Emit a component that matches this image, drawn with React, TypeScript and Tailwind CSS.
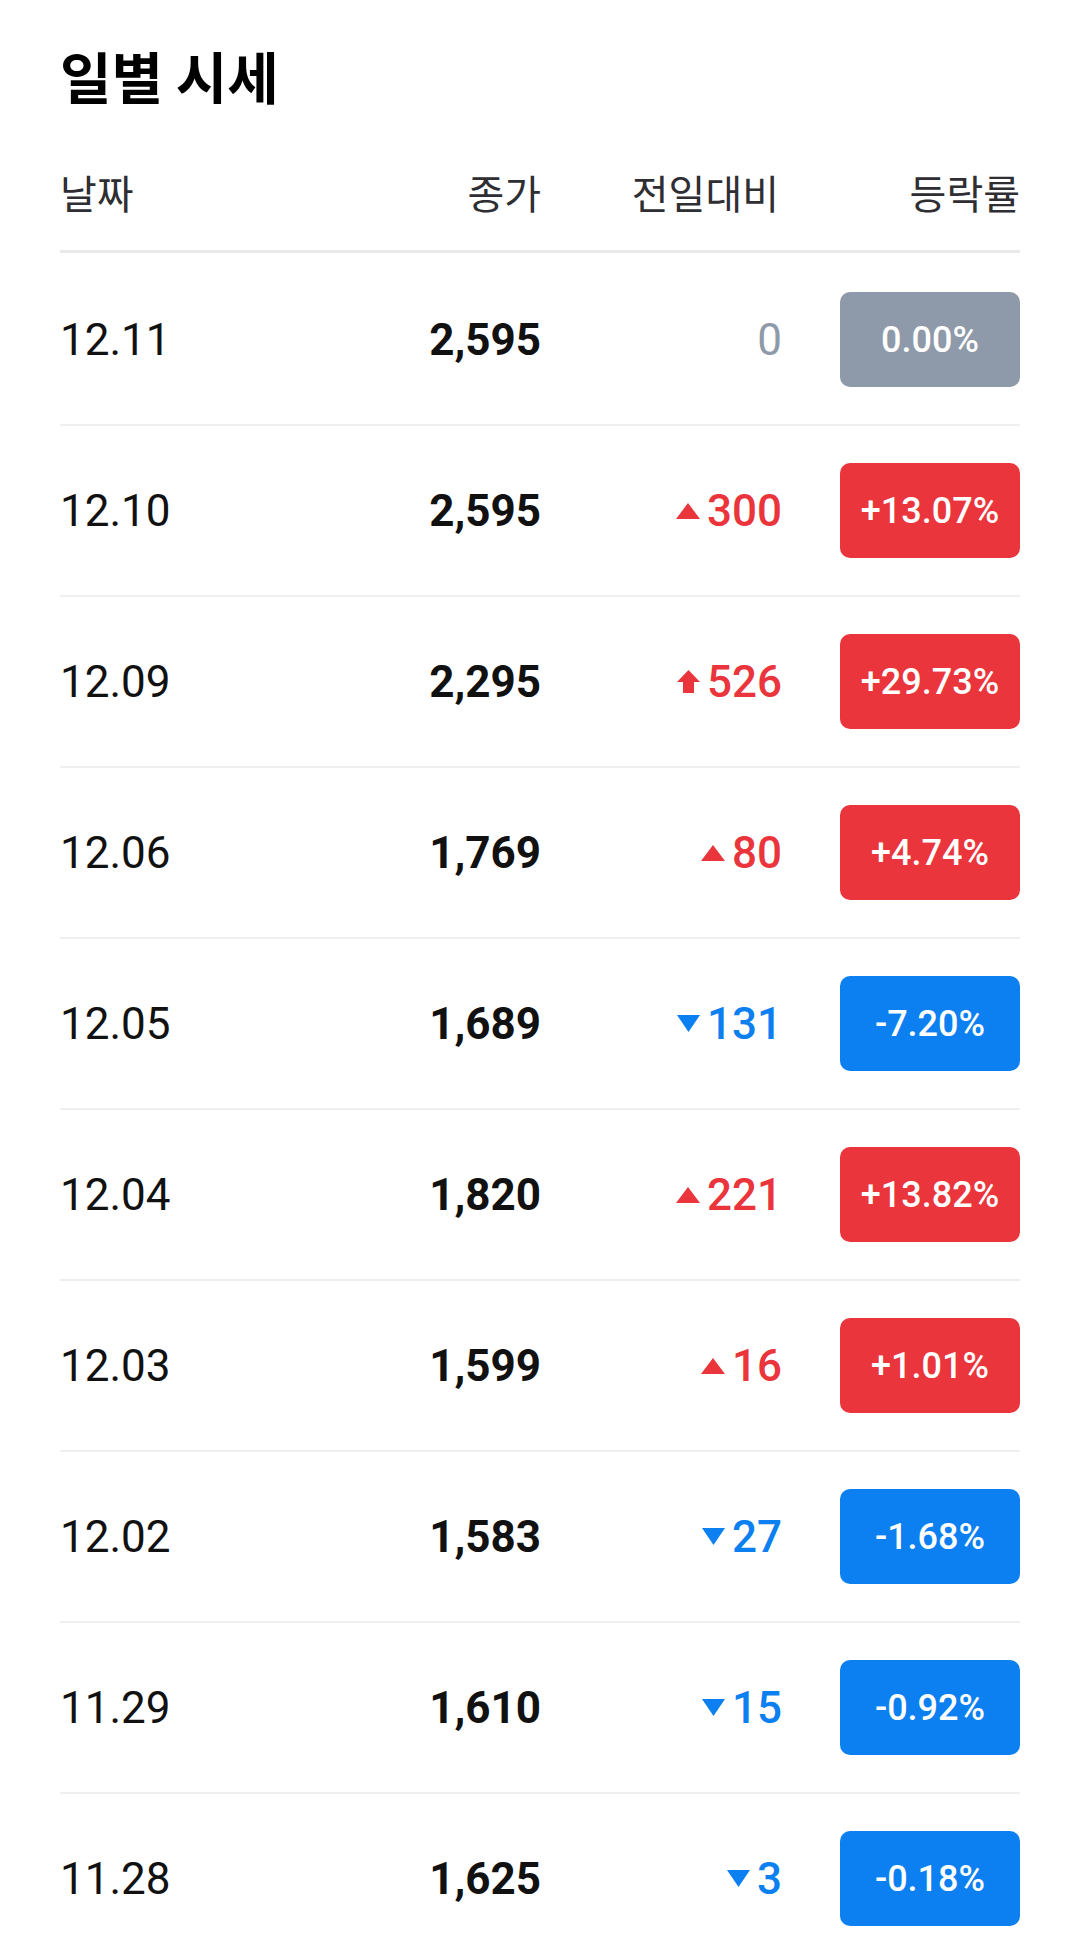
import React from "react";

type Dir = "flat" | "up" | "limit" | "down";
const rows: { d: string; p: string; c: string; r: string; dir: Dir }[] = [
  { d: "12.11", p: "2,595", c: "0", r: "0.00%", dir: "flat" },
  { d: "12.10", p: "2,595", c: "300", r: "+13.07%", dir: "up" },
  { d: "12.09", p: "2,295", c: "526", r: "+29.73%", dir: "limit" },
  { d: "12.06", p: "1,769", c: "80", r: "+4.74%", dir: "up" },
  { d: "12.05", p: "1,689", c: "131", r: "-7.20%", dir: "down" },
  { d: "12.04", p: "1,820", c: "221", r: "+13.82%", dir: "up" },
  { d: "12.03", p: "1,599", c: "16", r: "+1.01%", dir: "up" },
  { d: "12.02", p: "1,583", c: "27", r: "-1.68%", dir: "down" },
  { d: "11.29", p: "1,610", c: "15", r: "-0.92%", dir: "down" },
  { d: "11.28", p: "1,625", c: "3", r: "-0.18%", dir: "down" },
];

function Icon({ dir }: { dir: Dir }) {
  if (dir === "up")
    return (
      <svg width="24" height="16" viewBox="0 0 24 16" className="mr-[7px]">
        <polygon points="12,0 24,16 0,16" fill="#e9353b" />
      </svg>
    );
  if (dir === "down")
    return (
      <svg width="23" height="17" viewBox="0 0 23 17" className="mr-[7px]">
        <polygon points="0,0 23,0 11.5,17" fill="#0c80f0" />
      </svg>
    );
  if (dir === "limit")
    return (
      <svg width="23" height="23" viewBox="0 0 23 23" className="mr-[7px]">
        <polygon points="11.5,0 23,12 17,12 17,23 6,23 6,12 0,12" fill="#e9353b" />
      </svg>
    );
  return null;
}

export default function App() {
  return (
    <div
      className="bg-white w-[1080px] px-[60px] pt-[47px]"
      style={{ fontFamily: 'Roboto, "Noto Sans CJK KR", sans-serif' }}
    >
      <h1 className="text-[56px] leading-[56px] font-bold text-black" style={{ fontFamily: '"Noto Sans CJK KR", sans-serif' }}>
        일별 시세
      </h1>
      <div className="mt-[73px] flex items-center text-[40px] leading-[40px] text-[#2e2e33] pb-[34px] border-b-[3px] border-[#e9e9eb]">
        <div className="w-[200px]">날짜</div>
        <div className="w-[281px] text-right">종가</div>
        <div className="w-[238px] text-right">전일대비</div>
        <div className="ml-auto text-right">등락률</div>
      </div>
      <div className="pt-[2px]">
        {rows.map((r) => {
          const color =
            r.dir === "flat" ? "text-[#8e99a9]" : r.dir === "down" ? "text-[#0c80f0]" : "text-[#e9353b]";
          const bg =
            r.dir === "flat" ? "bg-[#8e99a9]" : r.dir === "down" ? "bg-[#0c80f0]" : "bg-[#e9353b]";
          return (
            <div key={r.d} className="flex items-center h-[171px] border-b-2 border-[#efeff1]">
              <div className="w-[200px] text-[44px] leading-none text-[#111]">{r.d}</div>
              <div className="w-[281px] text-right text-[44px] leading-none font-bold text-[#111]">{r.p}</div>
              <div className={`w-[241px] flex items-center justify-end text-[44px] leading-none ${color} ${r.dir === "flat" ? "font-normal" : "font-medium"}`}>
                <Icon dir={r.dir} />
                <span>{r.c}</span>
              </div>
              <div className={`ml-auto w-[180px] h-[95px] rounded-[10px] ${bg} flex items-center justify-center text-white text-[36px] leading-none font-medium`}>
                {r.r}
              </div>
            </div>
          );
        })}
      </div>
    </div>
  );
}
